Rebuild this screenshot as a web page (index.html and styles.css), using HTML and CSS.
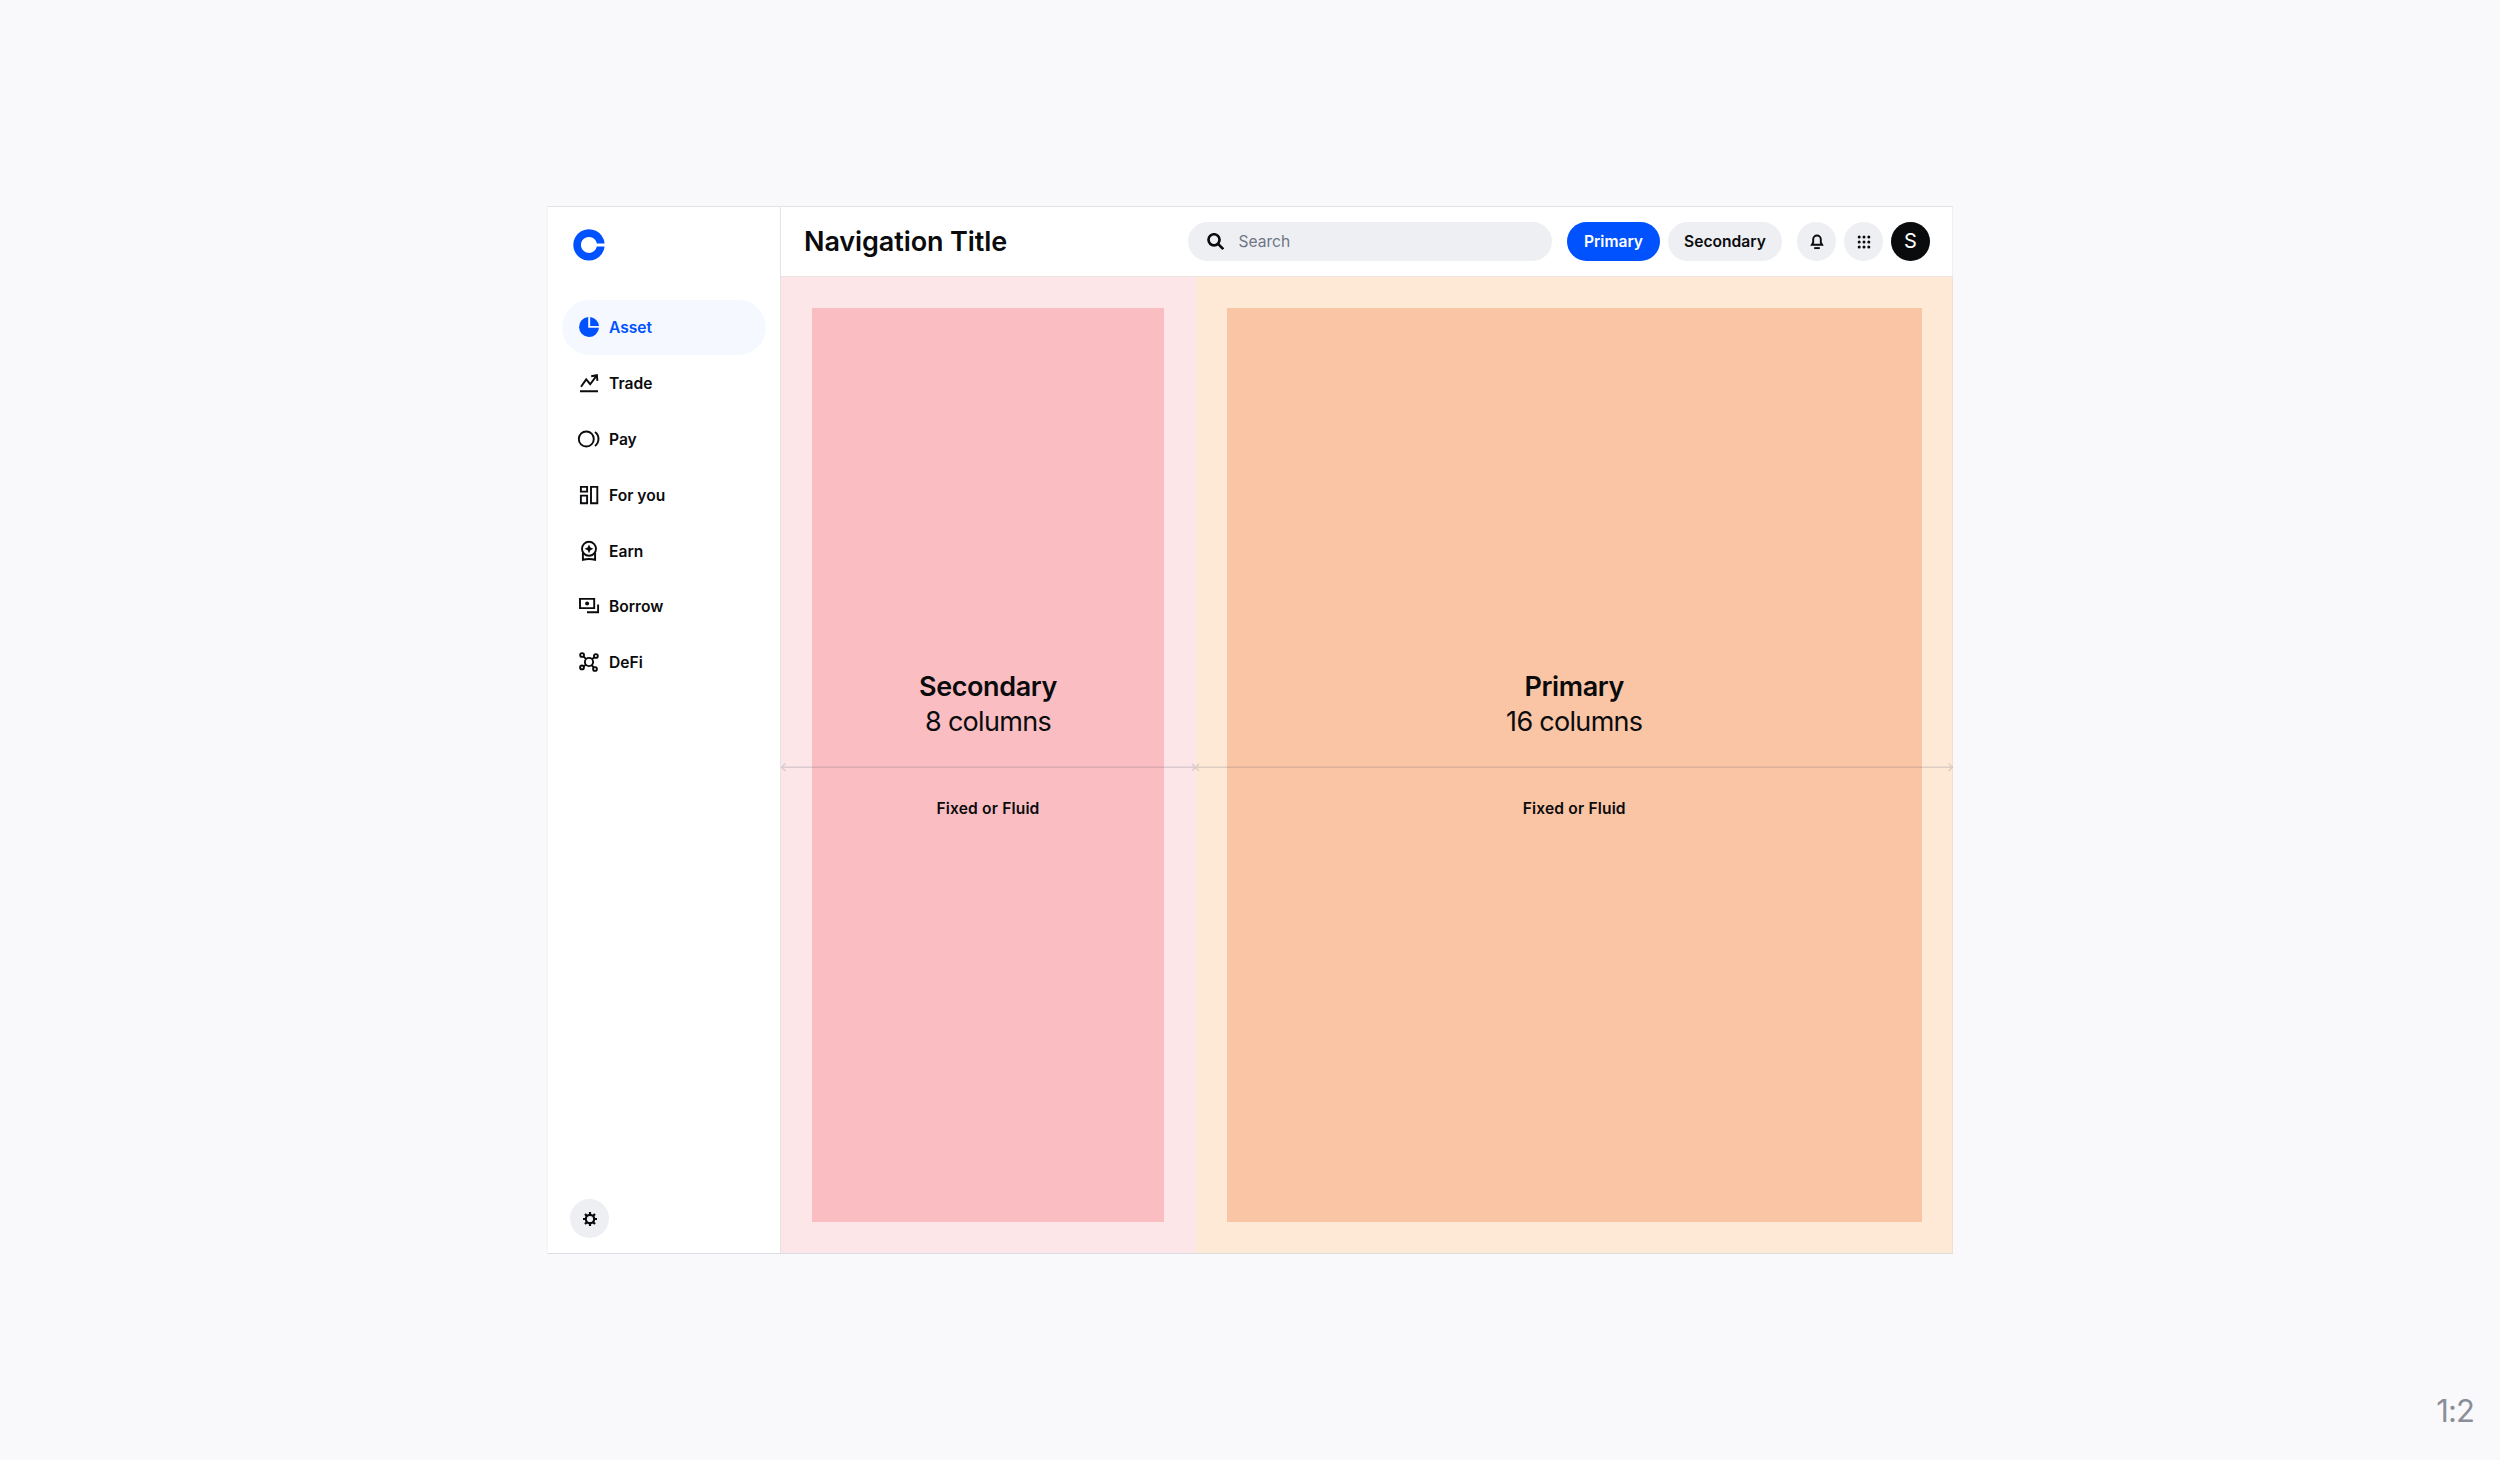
FILE: index.html
```html
<!DOCTYPE html>
<html lang="en">
<head>
  <meta charset="UTF-8">
  <meta name="viewport" content="width=device-width, initial-scale=1.0">
  <title>Layout 1:2</title>
  <link rel="stylesheet" href="styles.css">
</head>
<body>
  <div class="frame">
    <!-- Sidebar -->
    <aside class="sidebar">
      <svg class="logo" viewBox="0 0 32 32">
        <path d="M31.6 14.4A15.7 15.7 0 1 0 31.6 17.4H23.8A8 8 0 1 1 23.8 14.4Z"/>
      </svg>
      <nav class="menu">
        <a class="menuItem active">
          <svg viewBox="0 0 24 24"><path class="fill" d="M11.2 2A10 10 0 1 0 22 12.8H11.2Z"/><path class="fill" d="M13.2 2V10.9H22A10 10 0 0 0 13.2 2Z"/></svg>
          <span>Asset</span>
        </a>
        <a class="menuItem">
          <svg viewBox="0 0 24 24"><path d="M3 20.2H21M4 15.8L9.2 8.4L13.2 13.2L19.6 4.6M14.2 5.2L19.9 4.2L20.4 9.8"/></svg>
          <span>Trade</span>
        </a>
        <a class="menuItem">
          <svg viewBox="0 0 24 24"><circle cx="9.3" cy="12" r="7.5"/><path d="M18 5.1A8.6 8.6 0 0 1 18 18.9"/></svg>
          <span>Pay</span>
        </a>
        <a class="menuItem">
          <svg viewBox="0 0 24 24"><path d="M3.9 3.9H10.1V8.6H3.9ZM3.9 12.6H10.1V20.3H3.9ZM14 3.9H20.3V20.3H14Z"/></svg>
          <span>For you</span>
        </a>
        <a class="menuItem">
          <svg viewBox="0 0 24 24"><circle cx="12" cy="9.8" r="7"/><path d="M5.9 14V20.7Q12 19.3 18.1 20.7V14"/><path class="fill" d="M12 5.4L13.4 8.4L16.4 9.8L13.4 11.2L12 14.2L10.6 11.2L7.6 9.8L10.6 8.4Z"/></svg>
          <span>Earn</span>
        </a>
        <a class="menuItem">
          <svg viewBox="0 0 24 24"><path d="M3 4.9H17.2V14.1H3ZM21.1 10.5V18.2H10"/><circle class="fill" cx="10.1" cy="9.4" r="2"/></svg>
          <span>Borrow</span>
        </a>
        <a class="menuItem">
          <svg viewBox="0 0 24 24"><circle cx="12" cy="12" r="4.1"/><circle cx="5.1" cy="5" r="1.9"/><circle cx="18.9" cy="6" r="1.9"/><circle cx="5" cy="17.4" r="1.9"/><circle cx="18" cy="19" r="1.9"/><path d="M6.5 6.4L9.1 9.1M17.4 7.3L14.9 9.2M6.6 16.3L9 14.8M16.8 17.5L14.6 15.2"/></svg>
          <span>DeFi</span>
        </a>
      </nav>
      <button class="iconButton settings">
        <svg viewBox="0 0 16 16"><circle cx="8" cy="8" r="4.2"/><path d="M8 1V3.6M8 12.4V15M1 8H3.6M12.4 8H15M3 3L4.9 4.9M11.1 11.1L13 13M3 13L4.9 11.1M11.1 4.9L13 3"/></svg>
      </button>
    </aside>

    <main class="main">
      <!-- Navigation bar -->
      <header class="header">
        <h1>Navigation Title</h1>
        <div class="search">
          <svg viewBox="0 0 16 16"><circle cx="6.6" cy="6.4" r="5.2"/><path d="M10.4 10.2L15.3 15.1"/></svg>
          <span>Search</span>
        </div>
        <button class="button primary"><span>Primary</span></button>
        <button class="button secondary"><span>Secondary</span></button>
        <button class="iconButton">
          <svg viewBox="0 0 16 16"><path d="M2.9 10.8H13.1L11.8 8.6V5.3A3.8 3.8 0 0 0 4.2 5.3V8.6Z"/><path d="M5.2 14.1H10.8"/></svg>
        </button>
        <button class="iconButton">
          <svg viewBox="0 0 16 16"><g class="fill"><circle cx="3.2" cy="3.1" r="1.5"/><circle cx="8" cy="3.1" r="1.5"/><circle cx="12.8" cy="3.1" r="1.5"/><circle cx="3.2" cy="8" r="1.5"/><circle cx="8" cy="8" r="1.5"/><circle cx="12.8" cy="8" r="1.5"/><circle cx="3.2" cy="12.9" r="1.5"/><circle cx="8" cy="12.9" r="1.5"/><circle cx="12.8" cy="12.9" r="1.5"/></g></svg>
        </button>
        <div class="avatar">S</div>
      </header>

      <!-- Two column layout -->
      <div class="columns">
        <section class="column columnSecondary">
          <div class="area">
            <h2>Secondary</h2>
            <p class="count">8 columns</p>
            <p class="note">Fixed or Fluid</p>
          </div>
        </section>
        <section class="column columnPrimary">
          <div class="area">
            <h2>Primary</h2>
            <p class="count">16 columns</p>
            <p class="note">Fixed or Fluid</p>
          </div>
        </section>
        <svg class="measure" viewBox="0 0 1172 10">
          <path d="M0 5.3H1172M0.5 5.3L4.5 1.5M0.5 5.3L4.5 9.1M411 1.8L418 8.8M418 1.8L411 8.8M1167.5 1.5L1171.5 5.3L1167.5 9.1"/>
        </svg>
      </div>
    </main>
  </div>
  <div class="ratio">1:2</div>
</body>
</html>
```
FILE: styles.css
```css
* {
  box-sizing: border-box;
}
body {
  margin: 0;
  height: 1460px;
  padding: 206px 547px;
  background-color: #f9f9fc;
  color: #0a0b0d;
  font-family: Inter, sans-serif;
  overflow: hidden;
}
h1, h2, p {
  margin: 0;
}
svg {
  display: block;
  fill: none;
  stroke: currentColor;
  stroke-width: 1.9;
}
.fill {
  fill: currentColor;
  stroke: none;
}
.frame {
  display: flex;
  width: 1406px;
  height: 1048px;
  background-color: #fff;
  border: 1px solid #e2e3e6;
  border-left-color: #f3f4f6;
  border-right: none;
  border-bottom-color: #dcdde2;
}

/* Sidebar */
.sidebar {
  display: flex;
  flex-direction: column;
  width: 233px;
  padding: 22px 14px 15px;
  border-right: 1px solid #e2e3e6;
}
.logo {
  width: 32px;
  height: 32px;
  margin-left: 11px;
  fill: #0052ff;
  stroke: none;
}
.menu {
  display: flex;
  flex-direction: column;
  gap: 1px;
  margin-top: 39px;
}
.menuItem {
  display: flex;
  align-items: center;
  gap: 8px;
  width: 203.5px;
  height: 54.8px;
  padding-left: 15px;
  border-radius: 28px;
  font-size: 15.6px;
  font-weight: 600;
}
.menuItem svg {
  width: 24px;
  height: 24px;
}
.menuItem span {
  position: relative;
  top: 0.5px;
}
.active {
  background-color: #f5f8ff;
  color: #0052ff;
}

/* Buttons */
.iconButton {
  display: flex;
  align-items: center;
  justify-content: center;
  flex: none;
  width: 39px;
  height: 39px;
  padding: 0;
  border: none;
  border-radius: 50%;
  background-color: #eeeff3;
  color: #0a0b0d;
}
.iconButton svg {
  width: 16px;
  height: 16px;
}
.settings {
  margin-top: auto;
  margin-left: 8px;
}
.settings svg {
  stroke-width: 2.2;
}
.button {
  flex: none;
  height: 39px;
  padding: 0;
  border: none;
  border-radius: 20px;
  font-family: inherit;
  font-size: 15.6px;
  font-weight: 600;
}
.primary {
  width: 93px;
  margin-left: 15.5px;
  background-color: #0052ff;
  color: #fff;
}
.secondary {
  width: 114px;
  margin: 0 15px 0 8px;
  background-color: #eeeff3;
  color: #0a0b0d;
}

/* Navigation bar */
.main {
  display: flex;
  flex-direction: column;
  flex: 1;
}
.header {
  display: flex;
  align-items: center;
  height: 70px;
  padding: 0 22px 0 23px;
  border-right: 1px solid #f0f0f3;
  border-bottom: 1px solid #efe3e4;
}
.header h1 {
  flex: 1;
  font-size: 27px;
  font-weight: 600;
  letter-spacing: -0.1px;
}
.search {
  display: flex;
  align-items: center;
  gap: 15px;
  width: 364px;
  height: 39px;
  padding-left: 19px;
  border-radius: 20px;
  background-color: #eeeff3;
  font-size: 15.6px;
}
.search svg {
  width: 17px;
  height: 17px;
  stroke-width: 2.5;
}
.search span {
  color: #6f7686;
}
.iconButton + .iconButton,
.avatar {
  margin-left: 8px;
}
.avatar {
  flex: none;
  width: 39px;
  height: 39px;
  border-radius: 50%;
  background-color: #0a0b0d;
  color: #fff;
  font-size: 20px;
  line-height: 39px;
  text-align: center;
}

/* Columns */
.columns {
  position: relative;
  display: flex;
  flex: 1;
}
.column {
  display: flex;
  padding: 31px;
}
.columnSecondary {
  width: 414.5px;
  padding-right: 31.5px;
  background-color: #fce6e8;
}
.columnPrimary {
  flex: 1;
  padding-right: 30px;
  border-right: 1px solid #f5dfce;
  background-color: #fee9d7;
}
.area {
  flex: 1;
  padding-top: 361px;
  text-align: center;
}
.columnSecondary .area {
  background-color: #fabec2;
}
.columnPrimary .area {
  background-color: #fac5a5;
}
.area h2,
.count {
  font-size: 27px;
  line-height: 35px;
}
.area h2 {
  font-weight: 600;
  letter-spacing: -0.4px;
}
.count {
  font-weight: 400;
  letter-spacing: -0.7px;
}
.note {
  margin-top: 58px;
  font-size: 15.6px;
  font-weight: 600;
  line-height: 24px;
  letter-spacing: 0.15px;
}
/* width markers lie over both columns */
.measure {
  position: absolute;
  top: 485px;
  left: 0;
  width: 1172px;
  height: 10px;
  stroke: rgba(91, 97, 110, 0.2);
  stroke-width: 1.4;
}
.ratio {
  position: absolute;
  right: 26px;
  bottom: 30px;
  color: #8a8e96;
  font-size: 31px;
  line-height: 38px;
  letter-spacing: -0.9px;
}
```
